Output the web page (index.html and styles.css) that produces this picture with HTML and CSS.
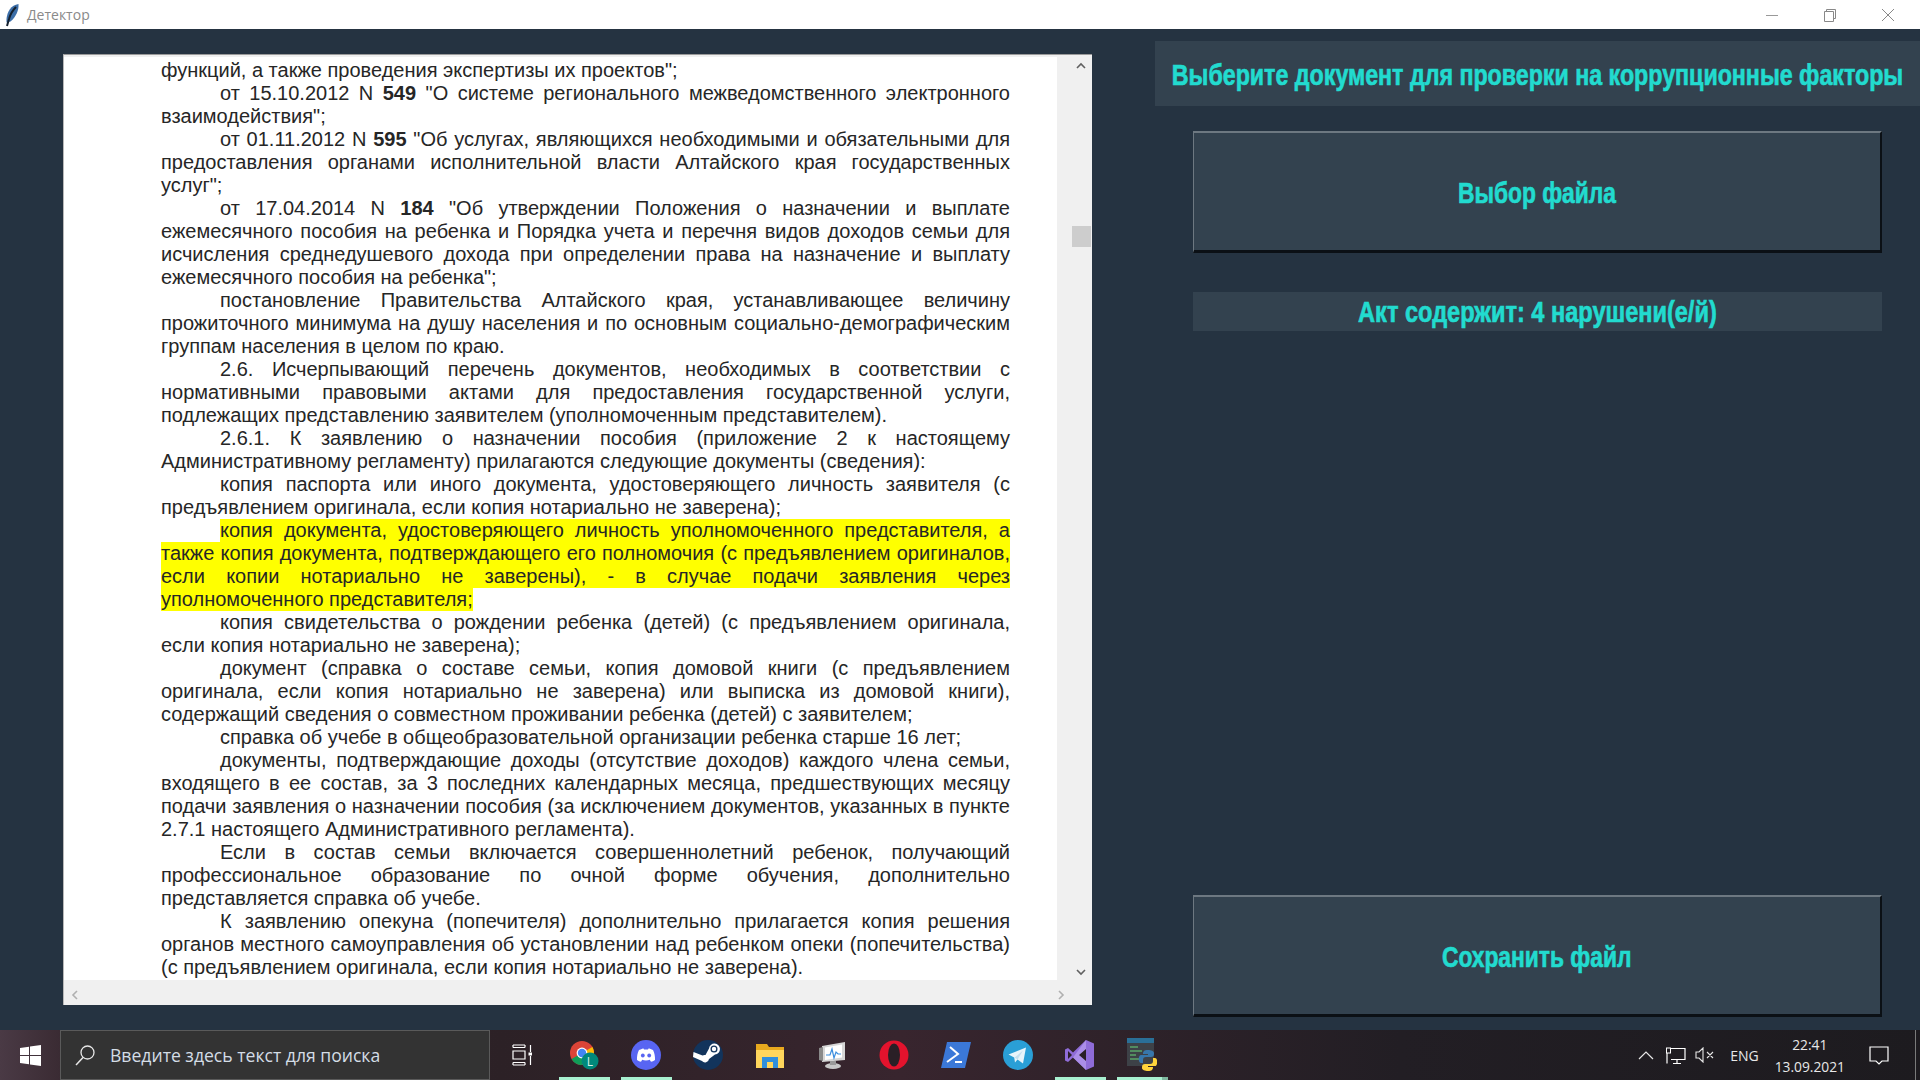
FILE: index.html
```html
<!DOCTYPE html>
<html lang="ru">
	<head>
		<meta charset="utf-8" />
		<title>Детектор</title>
		<link rel="stylesheet" href="styles.css">
	</head>
	<body>
		<header class="titlebar">
			<svg class="feather" width="16" height="24" viewBox="0 0 16 24"><path d="M14.500 1C7 2 3 9 2.500 16l0 3.500 4-1C12 14 15 7 14.500 1z" fill="#3c6ea8"/><path d="M12 4C8 8 6 12 5 16l-2 7" fill="none" stroke="#14202e" stroke-width="2"/></svg>
			<span class="titlebar-name">Детектор</span>
			<div class="window-controls">
				<svg width="14" height="14" viewBox="0 0 14 14"><path d="M1 7.500h12" stroke="#999" fill="none"/></svg>
				<svg width="14" height="14" viewBox="0 0 14 14"><path d="M1.500 3.500h9v10h-9zM3.500 3.500v-2h9v9h-2" stroke="#888" fill="none"/></svg>
				<svg width="14" height="14" viewBox="0 0 14 14"><path d="M1 1l12 12M13 1L1 13" stroke="#888" fill="none"/></svg>
			</div>
		</header>

		<main class="app">
			<section class="doc-panel">
				<div class="doc-row">
					<div class="doc">
						<div class="line">функций, а также проведения экспертизы их проектов";</div>
						<div class="line ind just">от 15.10.2012 N <b>549</b> "О системе регионального межведомственного электронного</div>
						<div class="line">взаимодействия";</div>
						<div class="line ind just">от 01.11.2012 N <b>595</b> "Об услугах, являющихся необходимыми и обязательными для</div>
						<div class="line just">предоставления органами исполнительной власти Алтайского края государственных</div>
						<div class="line">услуг";</div>
						<div class="line ind just">от 17.04.2014 N <b>184</b> "Об утверждении Положения о назначении и выплате</div>
						<div class="line just">ежемесячного пособия на ребенка и Порядка учета и перечня видов доходов семьи для</div>
						<div class="line just">исчисления среднедушевого дохода при определении права на назначение и выплату</div>
						<div class="line">ежемесячного пособия на ребенка";</div>
						<div class="line ind just">постановление Правительства Алтайского края, устанавливающее величину</div>
						<div class="line just">прожиточного минимума на душу населения и по основным социально-демографическим</div>
						<div class="line">группам населения в целом по краю.</div>
						<div class="line ind just">2.6. Исчерпывающий перечень документов, необходимых в соответствии с</div>
						<div class="line just">нормативными правовыми актами для предоставления государственной услуги,</div>
						<div class="line">подлежащих представлению заявителем (уполномоченным представителем).</div>
						<div class="line ind just">2.6.1. К заявлению о назначении пособия (приложение 2 к настоящему</div>
						<div class="line">Административному регламенту) прилагаются следующие документы (сведения):</div>
						<div class="line ind just">копия паспорта или иного документа, удостоверяющего личность заявителя (с</div>
						<div class="line">предъявлением оригинала, если копия нотариально не заверена);</div>
						<div class="line ind just mark">копия документа, удостоверяющего личность уполномоченного представителя, а</div>
						<div class="line just mark">также копия документа, подтверждающего его полномочия (с предъявлением оригиналов,</div>
						<div class="line just mark">если копии нотариально не заверены), - в случае подачи заявления через</div>
						<div class="line mark fit">уполномоченного представителя;</div>
						<div class="line ind just">копия свидетельства о рождении ребенка (детей) (с предъявлением оригинала,</div>
						<div class="line">если копия нотариально не заверена);</div>
						<div class="line ind just">документ (справка о составе семьи, копия домовой книги (с предъявлением</div>
						<div class="line just">оригинала, если копия нотариально не заверена) или выписка из домовой книги),</div>
						<div class="line">содержащий сведения о совместном проживании ребенка (детей) с заявителем;</div>
						<div class="line ind">справка об учебе в общеобразовательной организации ребенка старше 16 лет;</div>
						<div class="line ind just">документы, подтверждающие доходы (отсутствие доходов) каждого члена семьи,</div>
						<div class="line just">входящего в ее состав, за 3 последних календарных месяца, предшествующих месяцу</div>
						<div class="line just">подачи заявления о назначении пособия (за исключением документов, указанных в пункте</div>
						<div class="line">2.7.1 настоящего Административного регламента).</div>
						<div class="line ind just">Если в состав семьи включается совершеннолетний ребенок, получающий</div>
						<div class="line just">профессиональное образование по очной форме обучения, дополнительно</div>
						<div class="line">представляется справка об учебе.</div>
						<div class="line ind just">К заявлению опекуна (попечителя) дополнительно прилагается копия решения</div>
						<div class="line just">органов местного самоуправления об установлении над ребенком опеки (попечительства)</div>
						<div class="line">(с предъявлением оригинала, если копия нотариально не заверена).</div>
					</div>
					<div class="vscroll">
						<svg width="12" height="8" viewBox="0 0 12 8"><path d="M2 6l4-4 4 4" fill="none" stroke="#606060" stroke-width="1.600"/></svg>
						<div class="vscroll-thumb"></div>
						<svg class="vscroll-down" width="12" height="8" viewBox="0 0 12 8"><path d="M2 2l4 4 4-4" fill="none" stroke="#606060" stroke-width="1.600"/></svg>
					</div>
				</div>
				<div class="hscroll">
					<svg width="8" height="12" viewBox="0 0 8 12"><path d="M6 2L2 6l4 4" fill="none" stroke="#b0b0b0" stroke-width="1.600"/></svg>
					<svg width="8" height="12" viewBox="0 0 8 12"><path d="M2 2l4 4-4 4" fill="none" stroke="#b0b0b0" stroke-width="1.600"/></svg>
				</div>
			</section>

			<section class="side">
				<h1 class="side-title"><span class="heavy heavy-title">Выберите документ для проверки на коррупционные факторы</span></h1>
				<div class="side-body">
					<button class="action"><span class="heavy">Выбор файла</span></button>
					<div class="result"><span class="heavy heavy-result">Акт содержит: 4 нарушени(е/й)</span></div>
					<button class="action action-save"><span class="heavy">Сохранить файл</span></button>
				</div>
			</section>
		</main>

		<footer class="taskbar">
			<div class="start">
				<svg width="21" height="21" viewBox="0 0 21 21"><path d="M0 3l9-1.300V10H0zM10 1.500L21 0v10H10zM0 11h9v8.300L0 18zM10 11h11v10l-11-1.500z" fill="#fff"/></svg>
			</div>
			<div class="search">
				<svg width="22" height="22" viewBox="0 0 22 22"><circle cx="13.500" cy="8.500" r="6.500" fill="none" stroke="#e8e8e8" stroke-width="1.300"/><path d="M9 13.500L2 21" stroke="#e8e8e8" stroke-width="1.500"/></svg>
				<span>Введите здесь текст для поиска</span>
			</div>
			<div class="apps">
				<div class="app-slot app-slot-view">
					<svg width="20" height="22" viewBox="0 0 20 22"><path d="M1 1h12M1 3.500h12M1 7h12v8H1zM1 18.500h12M1 21h12M1 1v2.500M13 1v2.500M1 18.500V21M13 18.500V21M18.500 1v7M18.500 12v9" fill="none" stroke="#fff" stroke-width="1.200"/><rect x="16.500" y="8.500" width="4" height="3" fill="#fff"/></svg>
				</div>
				<div class="app-slot running">
					<svg width="30" height="30" viewBox="0 0 30 30"><circle cx="13" cy="13" r="12" fill="#db4437"/><path d="M13 13L2.600 19A12 12 0 0 0 13 25z" fill="#0f9d58"/><path d="M13 13l10.400-6A12 12 0 0 1 19 23.400z" fill="#fbbc05"/><circle cx="13" cy="13" r="5.400" fill="#fff"/><circle cx="13" cy="13" r="4.200" fill="#4285f4"/><circle cx="21" cy="21" r="8.500" fill="#00897b"/><text x="21" y="25.500" class="badge-letter">L</text></svg>
				</div>
				<div class="app-slot running">
					<svg width="30" height="30" viewBox="0 0 30 30"><circle cx="15" cy="15" r="15" fill="#5865f2"/><path d="M8 10c2-1 4-1.600 4.500-1.600l.5 1h4l.5-1c1 0 3 .6 4.500 1.600 1.500 3 2.200 6.500 2 10-1.400 1-2.800 1.600-4 1.800l-1-1.600-.2-.4c-2 .8-5.800.8-7.600 0l-1.200 2c-1.200-.2-2.600-.8-4-1.800-.2-3.500.5-7 2-10z" fill="#fff"/><circle cx="11.800" cy="15.500" r="1.900" fill="#5865f2"/><circle cx="18.200" cy="15.500" r="1.900" fill="#5865f2"/></svg>
				</div>
				<div class="app-slot">
					<svg width="30" height="30" viewBox="0 0 30 30"><circle cx="15" cy="15" r="15" fill="#12345c"/><path d="M0 17l9 4a4 4 0 0 0 7-2l6-4.500a5.500 5.500 0 1 0-6-6l-3.500 6.500a4 4 0 0 0-3 .5L.5 12z" fill="#fff"/><circle cx="21" cy="9" r="3.500" fill="#12345c"/><circle cx="21" cy="9" r="2.200" fill="#fff"/></svg>
				</div>
				<div class="app-slot">
					<svg width="28" height="26" viewBox="0 0 28 26"><path d="M0 2h11l2 3h15v21H0z" fill="#e8a91e"/><path d="M0 8h28v18H0z" fill="#ffd65c"/><path d="M6 26V15h16v11h-5v-6h-6v6z" fill="#2f8fdc"/></svg>
				</div>
				<div class="app-slot">
					<svg width="30" height="30" viewBox="0 0 30 30"><path d="M5 6l23-4v18L5 22z" fill="#d6d6d6"/><path d="M8 7.500l17-3v13L8 20z" fill="#fff"/><path d="M9 15h4l2-6 2 9 2-6 2 2h3" fill="none" stroke="#3a8dde" stroke-width="1.200"/><path d="M2 8l4-1v14l-4-1z" fill="#8a8a8a"/><ellipse cx="16" cy="26" rx="8" ry="3" fill="#c8c8c8"/><rect x="13" y="21" width="6" height="4" fill="#999"/></svg>
				</div>
				<div class="app-slot">
					<svg width="30" height="30" viewBox="0 0 30 30"><circle cx="15" cy="15" r="14.500" fill="#e3132d"/><ellipse cx="15" cy="15" rx="6" ry="11.500" fill="#2a1f26"/></svg>
				</div>
				<div class="app-slot">
					<svg width="30" height="30" viewBox="0 0 30 30"><path d="M6 2h24l-6 26H0z" fill="#3b78d8"/><path d="M9 7l8 7-11 8" fill="none" stroke="#fff" stroke-width="2"/><path d="M14 22h7" stroke="#fff" stroke-width="2"/></svg>
				</div>
				<div class="app-slot">
					<svg width="30" height="30" viewBox="0 0 30 30"><circle cx="15" cy="15" r="15" fill="#2a9fd6"/><path d="M5.500 14.500L23 7.500l-3 16-5.500-4-2.500 3-.8-5z" fill="#e8f4fa"/><path d="M11.700 17.500L20 10.500l-5.500 9z" fill="#c4dfee"/></svg>
				</div>
				<div class="app-slot running">
					<svg width="30" height="32" viewBox="0 0 30 32"><path d="M21 1l8 3.500v23L21 31 8 18.500 3 23l-3-1.500v-11L3 9l5 4.500z" fill="#8f6cd8"/><path d="M21 1v30L8 18.500z" fill="#b79cef" fill-opacity=".7"/><path d="M3 12v8l4-4zM21 10l-7 6 7 6z" fill="#2a1f26"/></svg>
				</div>
				<div class="app-slot running running-split">
					<svg width="30" height="34" viewBox="0 0 30 34"><rect width="27" height="28" fill="#3d4147"/><rect width="27" height="5" fill="#2a6f97"/><path d="M3 9h8M3 13h12M3 17h6M3 21h10" stroke="#5aa469" stroke-width="1.300"/><path d="M21 12c-4 0-5 1.500-5 4h5v1h-7c-3 0-3 8 0 8h2v-3c0-2 1-3 3-3h5c2 0 3-1 3-3v-1c0-2-3-3-6-3z" fill="#3776ab"/><path d="M21 33c4 0 5-1.500 5-4h-5v-1h7c3 0 3-8 0-8h-2v3c0 2-1 3-3 3h-5c-2 0-3 1-3 3v1c0 2 3 3 6 3z" fill="#ffd43b"/></svg>
				</div>
			</div>
			<div class="tray">
				<svg width="16" height="10" viewBox="0 0 16 10"><path d="M1 9l7-7 7 7" fill="none" stroke="#e8e8e8" stroke-width="1.200"/></svg>
				<svg class="tray-net" width="20" height="17" viewBox="0 0 20 17"><path d="M1 1.500h18v11H5M1 1.500v15M7 16.500h8M11 13v3" fill="none" stroke="#fff" stroke-width="1.200"/><rect x="0.500" y="1" width="4" height="5" fill="#1f1b20" stroke="#fff"/></svg>
				<svg class="tray-sound" width="20" height="16" viewBox="0 0 20 16"><path d="M1 5h3l4-4v14l-4-4H1zM12 5l6 6M18 5l-6 6" fill="none" stroke="#e8e8e8" stroke-width="1.100"/></svg>
				<span class="tray-lang">ENG</span>
				<div class="clock"><span>22:41</span><span>13.09.2021</span></div>
				<svg class="tray-notify" width="20" height="19" viewBox="0 0 20 19"><path d="M1 1h18v14h-6l-3 3-3-3H1z" fill="none" stroke="#fff" stroke-width="1.200"/></svg>
				<div class="show-desktop"></div>
			</div>
		</footer>
	</body>
</html>
```

FILE: styles.css
```css
html,
body {
	margin: 0;
	height: 100%;
}

body {
	display: flex;
	flex-direction: column;
	width: 1920px;
	height: 1080px;
	overflow: hidden;
	background: #253341;
	font-family: 'Liberation Sans', Arial, sans-serif;
}

.titlebar {
	display: flex;
	align-items: center;
	height: 29px;
	padding-left: 4px;
	background: #ffffff;
}

.feather {
	margin-right: 7px;
}

.titlebar-name {
	color: #8a8a8a;
	font-family: 'Open Sans', sans-serif;
	font-size: 14px;
}

.window-controls {
	display: flex;
	gap: 44px;
	margin-left: auto;
	margin-right: 25px;
}

.app {
	display: flex;
	flex: 1;
	min-height: 0;
	padding-top: 12px;
}

.doc-panel {
	display: flex;
	flex: none;
	flex-direction: column;
	box-sizing: border-box;
	width: 1029px;
	height: 951px;
	margin: 13px 0 0 63px;
	border-top: 1px solid #9a9a9a;
	border-left: 1px solid #b8b8b8;
	background: #f0f0f0;
}

.doc-row {
	display: flex;
	height: 925px;
}

.doc {
	box-sizing: border-box;
	width: 993px;
	margin-top: 2px;
	padding: 2px 47px 0 97px;
	background: #ffffff;
	color: #262626;
	font-size: 20px;
	line-height: 23px;
}

.line {
	white-space: nowrap;
}

.line b {
	font-weight: 700;
}

.just {
	white-space: normal;
	text-align: justify;
	text-align-last: justify;
}

.ind {
	margin-left: 59px;
}

.mark {
	background: #ffff00;
}

.fit {
	width: fit-content;
}

.vscroll {
	display: flex;
	flex-direction: column;
	align-items: center;
	flex: 1;
	padding: 7px 0 0 13px;
}

.vscroll-thumb {
	width: 19px;
	height: 21px;
	margin-top: 156px;
	background: #cdcdcd;
}

.vscroll-down {
	margin-top: auto;
	margin-bottom: 4px;
}

.hscroll {
	display: flex;
	justify-content: space-between;
	align-items: center;
	box-sizing: border-box;
	height: 25px;
	padding: 5px 27px 0 7px;
}

.side {
	display: flex;
	flex-direction: column;
	flex: 1;
	min-width: 0;
	margin-left: 63px;
}

.side-title {
	display: flex;
	justify-content: center;
	align-items: center;
	box-sizing: border-box;
	height: 65px;
	margin: 0;
	padding-top: 2px;
	background: #33424f;
}

.heavy {
	flex: none;
	display: inline-block;
	transform: scaleX(0.76);
	color: #22dbcf;
	font-size: 30px;
	font-weight: 700;
	-webkit-text-stroke: 0.7px #22dbcf;
	white-space: nowrap;
}

.heavy-title {
	transform: scaleX(0.774);
}

.heavy-result {
	transform: scaleX(0.785);
}

.side-body {
	display: flex;
	flex-direction: column;
	flex: 1;
	padding: 25px 38px 13px;
}

.action {
	display: flex;
	justify-content: center;
	align-items: center;
	box-sizing: border-box;
	height: 122px;
	padding: 2px 0 0;
	border: 2px solid #0b1015;
	border-top-color: #6d7881;
	border-left: 1px solid #6d7881;
	border-bottom-width: 3px;
	background: #33424f;
}

.action-save {
	margin-top: auto;
}

.result {
	display: flex;
	justify-content: center;
	align-items: center;
	height: 39px;
	margin-top: 39px;
	background: #33424f;
}

.taskbar {
	display: flex;
	align-items: center;
	height: 50px;
	background: linear-gradient(90deg, #4a3a45 0, #3a2b33 60px, #2c2126 500px, #38252e 900px, #221e24 1400px, #1d1b1f 1920px);
	color: #ffffff;
}

.start {
	display: flex;
	justify-content: center;
	align-items: center;
	width: 60px;
	height: 50px;
}

.search {
	display: flex;
	align-items: center;
	box-sizing: border-box;
	width: 430px;
	height: 50px;
	padding-left: 13px;
	border: 1px solid #5a5a5a;
	background: #333333;
	color: #d4dde6;
	font-family: 'Open Sans', sans-serif;
	font-size: 17.6px;
}

.search span {
	margin-left: 14px;
}

.apps {
	display: flex;
	height: 50px;
}

.app-slot {
	display: flex;
	justify-content: center;
	align-items: center;
	width: 62px;
	height: 50px;
}

.app-slot-view {
	width: 63px;
}

.badge-letter {
	fill: #d8f0ea;
	font-family: 'Open Sans', sans-serif;
	font-size: 12px;
	text-anchor: middle;
}

.running {
	background: linear-gradient(#a8f0d0, #a8f0d0) no-repeat 6px bottom / 51px 3px;
}

.running-split {
	background: linear-gradient(90deg, #a8f0d0 45px, #7fb8a0 45px) no-repeat 6px bottom / 51px 3px;
}

.tray {
	display: flex;
	justify-content: flex-end;
	align-items: center;
	flex: 1;
	height: 50px;
	color: #e8e8e8;
	font-family: 'Open Sans', sans-serif;
	font-size: 14px;
}

.tray-net {
	margin-left: 12px;
}

.tray-sound {
	margin-left: 9px;
}

.tray-lang {
	margin-left: 15px;
}

.clock {
	display: flex;
	flex-direction: column;
	align-items: center;
	gap: 3px;
	margin-left: 16px;
	font-size: 13.800px;
}

.tray-notify {
	margin-left: 24px;
}

.show-desktop {
	align-self: stretch;
	width: 4px;
	margin-left: 26px;
	border-left: 1px solid #7a7a7a;
}
```
